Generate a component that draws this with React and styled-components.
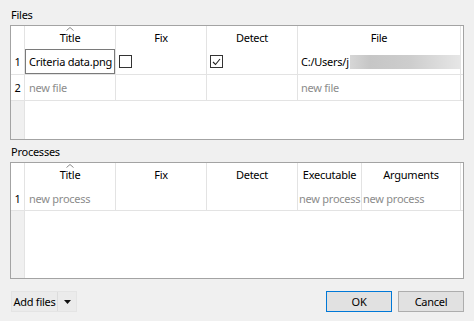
import React from "react";
import styled, { createGlobalStyle } from "styled-components";

const GlobalStyle = createGlobalStyle`
  html, body { margin: 0; padding: 0; }
  body {
    background: #f0f0f0;
    font-family: "Noto Sans", "Open Sans", sans-serif;
    font-size: 11px;
    letter-spacing: -0.25px;
    color: #000;
  }
`;

const Dialog = styled.div`
  width: 474px;
  height: 321px;
  box-sizing: border-box;
  padding: 5px 10px 0 10px;
  display: flex;
  flex-direction: column;
`;

const SectionLabel = styled.div`
  height: 20px;
  line-height: 19px;
  margin-top: ${(p) => p.$top || 0}px;
  padding-left: 1px;
`;

const Table = styled.div`
  height: ${(p) => p.$height}px;
  box-sizing: border-box;
  border: 1px solid #a3a3a3;
  background: #fff;
  display: flex;
  flex-direction: column;
`;

const GridRow = styled.div`
  display: grid;
  grid-template-columns: ${(p) => p.$cols};
  height: ${(p) => p.$height}px;
  box-sizing: border-box;
  border-bottom: ${(p) => (p.$line ? "1px solid #e3e3e3" : "none")};
`;

const HeaderCell = styled.div`
  position: relative;
  border-right: ${(p) => (p.$noLine ? "none" : "1px solid #e3e3e3")};
  display: flex;
  align-items: center;
  justify-content: center;
  box-sizing: border-box;
`;

const SortCaret = styled.svg`
  position: absolute;
  top: 1px;
  left: 50%;
  margin-left: -4px;
`;

const Cell = styled.div`
  border-right: ${(p) => (p.$noLine ? "none" : "1px solid #e3e3e3")};
  display: flex;
  align-items: center;
  padding-left: ${(p) => (p.$pad ?? 4)}px;
  box-sizing: border-box;
  color: ${(p) => (p.$placeholder ? "#8c8c8c" : "#000")};
  white-space: nowrap;
  overflow: hidden;
`;

const RowNum = styled.div`
  border-right: 1px solid #e3e3e3;
  display: flex;
  align-items: center;
  justify-content: center;
`;

const Editor = styled.div`
  height: 100%;
  width: 100%;
  box-sizing: border-box;
  border: 1px solid #7a7a7a;
  display: flex;
  align-items: center;
  padding-left: 3px;
  background: #fff;
`;

const Box = styled.div`
  width: 13px;
  height: 13px;
  box-sizing: border-box;
  border: 1px solid #333;
  background: #fff;
  display: flex;
  align-items: center;
  justify-content: center;
`;

const Redacted = styled.div`
  flex: 1;
  height: 14px;
  margin-left: 1px;
  background: linear-gradient(
    to right,
    #d6d6d6 0%,
    #c6c6c6 18%,
    #cdcdcd 55%,
    #e6e6e6 100%
  );
`;

const Filler = styled.div`
  flex: 1;
  display: grid;
  grid-template-columns: 14px 1fr;
`;

const VHeaderStrip = styled.div`
  background: #f0f0f0;
  border-right: 1px solid #e3e3e3;
`;

const Footer = styled.div`
  display: flex;
  align-items: center;
  margin-top: 12px;
  padding-left: 1px;
`;

const SplitButton = styled.div`
  display: flex;
  height: 19px;
  border: 1px solid #e4e4e4;
  background: #ebebeb;
`;

const SplitMain = styled.div`
  width: 45px;
  display: flex;
  align-items: center;
  justify-content: center;
  border-right: 1px solid #dcdcdc;
`;

const SplitArrow = styled.div`
  width: 18px;
  display: flex;
  align-items: center;
  justify-content: center;
`;

const Spacer = styled.div`
  flex: 1;
`;

const Button = styled.div`
  width: 66px;
  height: 21px;
  box-sizing: border-box;
  margin-left: ${(p) => p.$gap || 0}px;
  border: 1px solid ${(p) => (p.$default ? "#0078d7" : "#adadad")};
  background: #e1e1e1;
  display: flex;
  align-items: center;
  justify-content: center;
`;

const Check = ({ checked }) => (
  <Box>
    {checked && (
      <svg width="9" height="8" viewBox="0 0 9 8">
        <polyline
          points="1,4 3.5,6.5 8,1"
          fill="none"
          stroke="#222"
          strokeWidth="1.1"
        />
      </svg>
    )}
  </Box>
);

const Caret = () => (
  <SortCaret width="8" height="4" viewBox="0 0 8 4">
    <polyline points="0.5,3.5 4,0.5 7.5,3.5" fill="none" stroke="#8a8a8a" strokeWidth="1" />
  </SortCaret>
);

const filesCols = "14px 91px 91px 91px 163px 1fr";
const procCols = "14px 91px 91px 91px 64px 99px 1fr";

export default function App() {
  return (
    <>
      <GlobalStyle />
      <Dialog>
        <SectionLabel>Files</SectionLabel>
        <Table $height={115}>
          <GridRow $cols={filesCols} $height={23}>
            <HeaderCell />
            <HeaderCell>
              <Caret />
              Title
            </HeaderCell>
            <HeaderCell>Fix</HeaderCell>
            <HeaderCell>Detect</HeaderCell>
            <HeaderCell>File</HeaderCell>
            <HeaderCell $noLine />
          </GridRow>
          <GridRow $cols={filesCols} $height={26} $line>
            <RowNum>1</RowNum>
            <Cell $pad={0}>
              <Editor>Criteria data.png</Editor>
            </Cell>
            <Cell $pad={3}>
              <Check />
            </Cell>
            <Cell $pad={3}>
              <Check checked />
            </Cell>
            <Cell $pad={3}>
              C:/Users/j
              <Redacted />
            </Cell>
            <Cell $noLine />
          </GridRow>
          <GridRow $cols={filesCols} $height={26} $line>
            <RowNum>2</RowNum>
            <Cell $placeholder>new file</Cell>
            <Cell />
            <Cell />
            <Cell $placeholder $pad={3}>new file</Cell>
            <Cell $noLine />
          </GridRow>
          <Filler>
            <VHeaderStrip />
            <div />
          </Filler>
        </Table>

        <SectionLabel $top={2}>Processes</SectionLabel>
        <Table $height={117}>
          <GridRow $cols={procCols} $height={23}>
            <HeaderCell />
            <HeaderCell>
              <Caret />
              Title
            </HeaderCell>
            <HeaderCell>Fix</HeaderCell>
            <HeaderCell>Detect</HeaderCell>
            <HeaderCell>Executable</HeaderCell>
            <HeaderCell>Arguments</HeaderCell>
            <HeaderCell $noLine />
          </GridRow>
          <GridRow $cols={procCols} $height={25} $line>
            <RowNum>1</RowNum>
            <Cell $placeholder>new process</Cell>
            <Cell />
            <Cell />
            <Cell $placeholder $pad={1}>new process</Cell>
            <Cell $placeholder $pad={1}>new process</Cell>
            <Cell $noLine />
          </GridRow>
          <Filler>
            <VHeaderStrip />
            <div />
          </Filler>
        </Table>

        <Footer>
          <SplitButton>
            <SplitMain>Add files</SplitMain>
            <SplitArrow>
              <svg width="7" height="4" viewBox="0 0 7 4">
                <polygon points="0,0 7,0 3.5,4" fill="#111" />
              </svg>
            </SplitArrow>
          </SplitButton>
          <Spacer />
          <Button $default>OK</Button>
          <Button $gap={6}>Cancel</Button>
        </Footer>
      </Dialog>
    </>
  );
}
